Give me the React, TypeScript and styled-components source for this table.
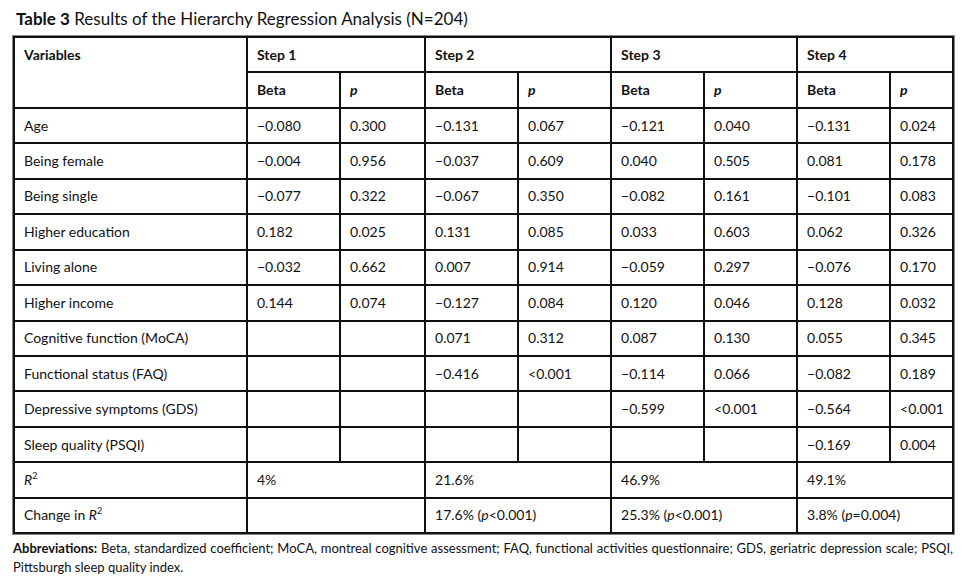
import React from 'react';
import styled, { createGlobalStyle } from 'styled-components';

const GlobalStyle = createGlobalStyle`
  html, body { margin: 0; padding: 0; background: #fff; }
  body { font-family: Lato, "Liberation Sans", sans-serif; color: #111; }
`;

const Page = styled.div`
  width: 971px;
  box-sizing: border-box;
  padding: 8px 0 0 13px;
`;

const Caption = styled.div`
  font-size: 17px;
  line-height: 22px;
  margin: 0 0 6px 3px;
  b { font-weight: 700; }
`;

const Table = styled.table`
  width: 940px;
  border-collapse: collapse;
  table-layout: fixed;
  font-size: 14px;
  outline: 1px solid #888;
`;

const Row = styled.tr`
  height: 35.45px;
`;

const Cell = styled.td<{ $head?: boolean; $top?: boolean }>`
  border: 2px solid #111;
  padding: 0 9px;
  vertical-align: ${(p) => (p.$top ? 'top' : 'middle')};
  padding-top: ${(p) => (p.$top ? '8px' : '0')};
  font-weight: ${(p) => (p.$head ? 700 : 400)};
  white-space: nowrap;
  line-height: 18px;
`;

const Note = styled.p`
  margin: 5px 18px 0 0;
  font-size: 13px;
  line-height: 19px;
  text-align: justify;
`;

const NoteLabel = styled.b`
  font-weight: 700;
`;

const P = () => <i>p</i>;
const R2 = () => (
  <>
    <i>R</i>
    <sup style={{ fontSize: '9px', verticalAlign: '6px', lineHeight: 0 }}>2</sup>
  </>
);

type Val = string;
const rows: [string, Val, Val, Val, Val, Val, Val, Val, Val][] = [
  ['Age', '−0.080', '0.300', '−0.131', '0.067', '−0.121', '0.040', '−0.131', '0.024'],
  ['Being female', '−0.004', '0.956', '−0.037', '0.609', '0.040', '0.505', '0.081', '0.178'],
  ['Being single', '−0.077', '0.322', '−0.067', '0.350', '−0.082', '0.161', '−0.101', '0.083'],
  ['Higher education', '0.182', '0.025', '0.131', '0.085', '0.033', '0.603', '0.062', '0.326'],
  ['Living alone', '−0.032', '0.662', '0.007', '0.914', '−0.059', '0.297', '−0.076', '0.170'],
  ['Higher income', '0.144', '0.074', '−0.127', '0.084', '0.120', '0.046', '0.128', '0.032'],
  ['Cognitive function (MoCA)', '', '', '0.071', '0.312', '0.087', '0.130', '0.055', '0.345'],
  ['Functional status (FAQ)', '', '', '−0.416', '<0.001', '−0.114', '0.066', '−0.082', '0.189'],
  ['Depressive symptoms (GDS)', '', '', '', '', '−0.599', '<0.001', '−0.564', '<0.001'],
  ['Sleep quality (PSQI)', '', '', '', '', '', '', '−0.169', '0.004'],
];

const widths = [233, 93, 85, 93, 93, 93, 93, 93, 63];

export default function App() {
  return (
    <Page>
      <GlobalStyle />
      <Caption>
        <b>Table 3</b> Results of the Hierarchy Regression Analysis (N=204)
      </Caption>
      <Table>
        <colgroup>
          {widths.map((w, i) => (
            <col key={i} style={{ width: w }} />
          ))}
        </colgroup>
        <tbody>
          <Row>
            <Cell $head $top rowSpan={2}>Variables</Cell>
            <Cell $head colSpan={2}>Step 1</Cell>
            <Cell $head colSpan={2}>Step 2</Cell>
            <Cell $head colSpan={2}>Step 3</Cell>
            <Cell $head colSpan={2}>Step 4</Cell>
          </Row>
          <Row>
            {[0, 1, 2, 3].map((i) => (
              <React.Fragment key={i}>
                <Cell $head>Beta</Cell>
                <Cell $head><P /></Cell>
              </React.Fragment>
            ))}
          </Row>
          {rows.map((r) => (
            <Row key={r[0]}>
              {r.map((v, i) => (
                <Cell key={i}>{v}</Cell>
              ))}
            </Row>
          ))}
          <Row>
            <Cell><R2 /></Cell>
            <Cell colSpan={2}>4%</Cell>
            <Cell colSpan={2}>21.6%</Cell>
            <Cell colSpan={2}>46.9%</Cell>
            <Cell colSpan={2}>49.1%</Cell>
          </Row>
          <Row>
            <Cell>Change in <R2 /></Cell>
            <Cell colSpan={2}></Cell>
            <Cell colSpan={2}>17.6% (<P />&lt;0.001)</Cell>
            <Cell colSpan={2}>25.3% (<P />&lt;0.001)</Cell>
            <Cell colSpan={2}>3.8% (<P />=0.004)</Cell>
          </Row>
        </tbody>
      </Table>
      <Note>
        <NoteLabel>Abbreviations:</NoteLabel>{' '}
        <span>Beta, standardized coefficient; MoCA, montreal cognitive assessment; FAQ, functional activities questionnaire; GDS, geriatric depression scale; PSQI,</span>{' '}
        <span>Pittsburgh sleep quality index.</span>
      </Note>
    </Page>
  );
}
